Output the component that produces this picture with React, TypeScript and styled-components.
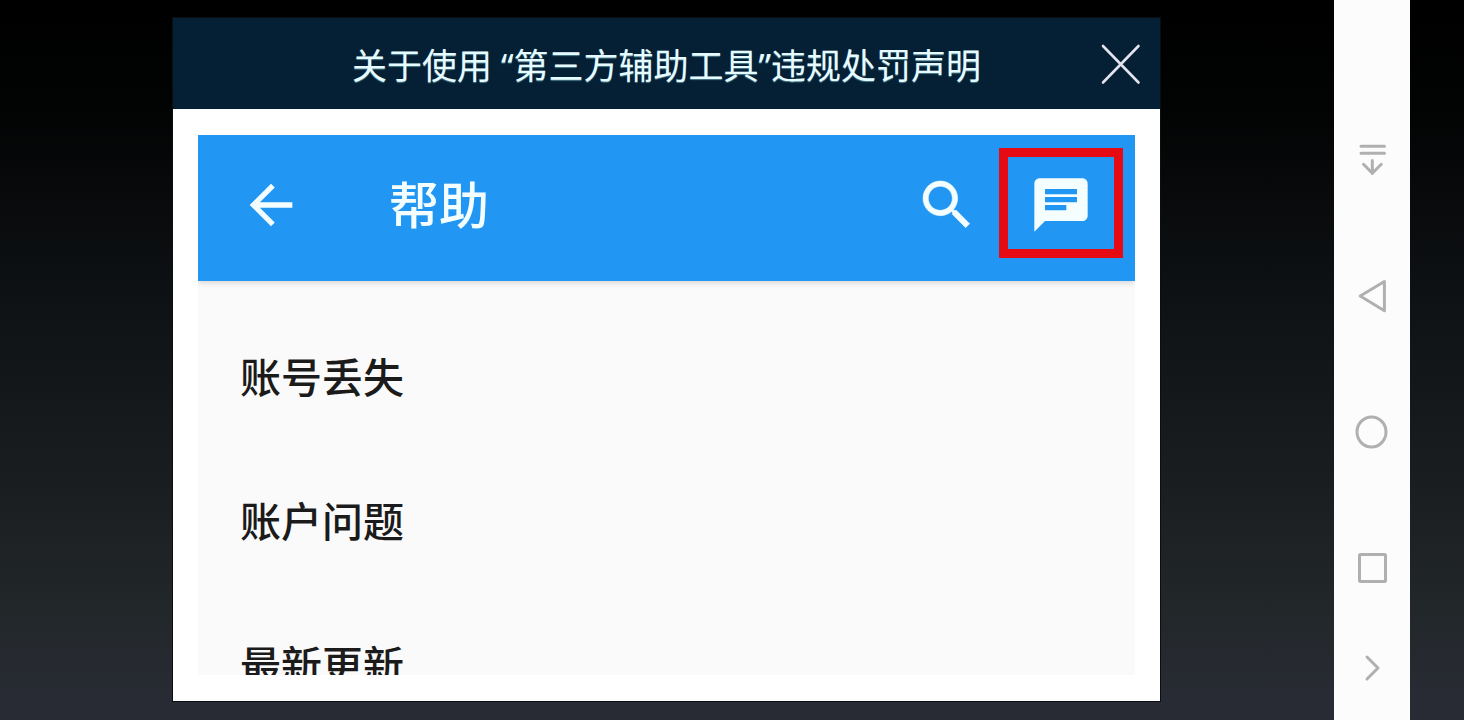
import React from "react";
import styled, { createGlobalStyle } from "styled-components";

const GlobalStyle = createGlobalStyle`
  *, *::before, *::after { box-sizing: border-box; }
  body {
    margin: 0;
    background: #000;
    font-family: "Noto Sans", "Noto Sans CJK SC", sans-serif;
  }
`;

const Screen = styled.div`
  display: flex;
  height: 100vh;
  padding-right: 54px;
  background: linear-gradient(
    180deg,
    #000 0%,
    #020303 15%,
    #0f1215 42%,
    #1b1e21 68%,
    #22272a 85%,
    #282b33 96%,
    #282b33 100%
  );
`;

const Stage = styled.main`
  display: flex;
  flex: 1;
  min-width: 0;
  padding: 18px 174px 19px 173px;
`;

const Dialog = styled.section`
  display: flex;
  flex: 1;
  flex-direction: column;
  min-width: 0;
  background: #fff;
  box-shadow: 0 0 0 1px #0b0d10;
`;

const DialogHeader = styled.header`
  display: grid;
  grid-template-columns: 1fr auto 1fr;
  align-items: center;
  flex: none;
  height: 91px;
  padding: 0 17px;
  background: #052035;
`;

const DialogTitle = styled.h1`
  grid-column: 2;
  margin: 0;
  padding-top: 4px;
  color: #e6fbff;
  font-size: 35px;
  font-weight: 400;
  line-height: 48px;
  text-shadow: 0 1px 1px rgba(150, 220, 230, 0.5);
  white-space: nowrap;
`;

const IconButton = styled.button`
  display: flex;
  align-items: center;
  justify-content: center;
  flex: none;
  padding: 0;
  border: 0;
  background: none;
  color: inherit;
  cursor: pointer;
`;

const CloseButton = styled(IconButton)`
  justify-self: end;
  color: #e4e4ee;
`;

const DialogBody = styled.div`
  display: flex;
  flex: 1;
  min-height: 0;
  padding: 26px 25px;
`;

const HelpPanel = styled.div`
  flex: 1;
  min-width: 0;
  overflow: hidden;
  background: #fafafa;
`;

const AppBar = styled.div`
  display: flex;
  align-items: center;
  height: 146px;
  padding: 0 12px 6px 41px;
  background: #2196f3;
  box-shadow: 0 1px 6px rgba(60, 40, 40, 0.22);
  color: #f4feff;
`;

const AppBarTitle = styled.h2`
  flex: 1;
  margin: 0 0 0 86px;
  font-size: 50px;
  font-weight: 500;
  line-height: 64px;
`;

const ChatButton = styled(IconButton)`
  width: 124px;
  height: 110px;
  margin: 0 0 4px 20px;
  padding-top: 4px;
  border: 9px solid #e60b12;
`;

const TopicList = styled.ul`
  margin: 0;
  padding: 24px 0 0;
  list-style: none;
`;

const TopicLink = styled.a`
  display: flex;
  align-items: center;
  height: 144px;
  padding: 0 42px;
  color: #1b1b1b;
  font-size: 41px;
  font-weight: 500;
  line-height: 56px;
  text-decoration: none;
`;

const NavBar = styled.nav`
  display: flex;
  flex: none;
  flex-direction: column;
  width: 76px;
  padding-top: 92px;
  background: #fcfcfc;
  color: #b0b0b0;
`;

const NavButton = styled(IconButton)<{ $compact?: boolean }>`
  width: 100%;
  height: ${({ $compact }) => ($compact ? 64 : 136)}px;
`;

const MaterialIcon = ({ d, weight = 0 }: { d: string; weight?: number }) => (
  <svg
    width="64"
    height="64"
    viewBox="0 0 24 24"
    fill="currentColor"
    stroke="currentColor"
    strokeWidth={weight}
    aria-hidden="true"
  >
    <path d={d} />
  </svg>
);

const NavIcon = ({ children }: { children: React.ReactNode }) => (
  <svg
    width="40"
    height="40"
    viewBox="0 0 40 40"
    fill="none"
    stroke="currentColor"
    strokeWidth="3"
    strokeLinecap="round"
    strokeLinejoin="round"
    aria-hidden="true"
  >
    {children}
  </svg>
);

const BACK = "M20 11H7.83l5.59-5.59L12 4l-8 8 8 8 1.41-1.41L7.83 13H20v-2z";
const SEARCH =
  "M15.5 14h-.79l-.28-.27C15.41 12.59 16 11.11 16 9.5 16 5.91 13.09 3 9.5 3S3 5.91 3 9.5 5.91 16 9.5 16c1.61 0 3.09-.59 4.23-1.57l.27.28v.79l5 4.99L20.49 19l-4.99-5zm-6 0C7.01 14 5 11.99 5 9.5S7.01 5 9.5 5 14 7.01 14 9.5 11.99 14 9.5 14z";
const CHAT =
  "M20 2H4c-1.1 0-1.99.9-1.99 2L2 22l4-4h14c1.1 0 2-.9 2-2V4c0-1.1-.9-2-2-2zM6 9h12v2H6V9zm8 5H6v-2h8v2zm4-6H6V6h12v2z";

const topics = ["账号丢失", "账户问题", "最新更新"];

export default function App() {
  return (
    <>
      <GlobalStyle />
      <Screen>
        <Stage>
          <Dialog role="dialog" aria-labelledby="dialog-title">
            <DialogHeader>
              <DialogTitle id="dialog-title">关于使用 “第三方辅助工具”违规处罚声明</DialogTitle>
              <CloseButton type="button" aria-label="关闭">
                <svg
                  width="44"
                  height="44"
                  viewBox="0 0 44 44"
                  fill="none"
                  stroke="currentColor"
                  strokeWidth="2.6"
                  strokeLinecap="round"
                  aria-hidden="true"
                >
                  <path d="M4 4l35.500 36.500M39.500 4L4 40.500" />
                </svg>
              </CloseButton>
            </DialogHeader>
            <DialogBody>
              <HelpPanel>
                <AppBar>
                  <IconButton type="button" aria-label="返回">
                    <MaterialIcon d={BACK} />
                  </IconButton>
                  <AppBarTitle>帮助</AppBarTitle>
                  <IconButton type="button" aria-label="搜索">
                    <MaterialIcon d={SEARCH} weight={0.2} />
                  </IconButton>
                  <ChatButton type="button" aria-label="联系客服">
                    <MaterialIcon d={CHAT} />
                  </ChatButton>
                </AppBar>
                <TopicList>
                  {topics.map((topic) => (
                    <li key={topic}>
                      <TopicLink href="#">{topic}</TopicLink>
                    </li>
                  ))}
                </TopicList>
              </HelpPanel>
            </DialogBody>
          </Dialog>
        </Stage>
        <NavBar aria-label="系统导航">
          <NavButton type="button" aria-label="下拉通知">
            <NavIcon>
              <path d="M9 6.300h23.500M9 13.300h23.500M20.300 20.500v13M11.500 24.300l8.800 9 9-9" />
            </NavIcon>
          </NavButton>
          <NavButton type="button" aria-label="返回">
            <NavIcon>
              <path d="M32.400 5.500v29.200L8.200 20z" />
            </NavIcon>
          </NavButton>
          <NavButton type="button" aria-label="主屏幕">
            <NavIcon>
              <ellipse cx="19.500" cy="20" rx="14.500" ry="15" />
            </NavIcon>
          </NavButton>
          <NavButton type="button" aria-label="最近任务">
            <NavIcon>
              <rect x="7.500" y="6.500" width="26" height="27" rx="1" />
            </NavIcon>
          </NavButton>
          <NavButton type="button" aria-label="隐藏导航栏" $compact>
            <NavIcon>
              <path d="M15 9l11 11L15 31" />
            </NavIcon>
          </NavButton>
        </NavBar>
      </Screen>
    </>
  );
}
